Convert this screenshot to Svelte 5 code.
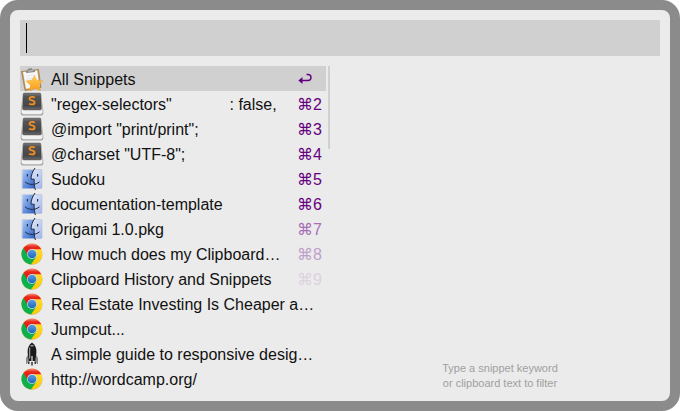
<script>
  const items = [
    { icon: 'clip', text: 'All Snippets', key: 'return', tone: '#660080' },
    { icon: 'sublime', text: '"regex-selectors"             : false,', key: '2', tone: '#660080' },
    { icon: 'sublime', text: '@import "print/print";', key: '3', tone: '#660080' },
    { icon: 'sublime', text: '@charset "UTF-8";', key: '4', tone: '#660080' },
    { icon: 'finder', text: 'Sudoku', key: '5', tone: '#660080' },
    { icon: 'finder', text: 'documentation-template', key: '6', tone: '#660080' },
    { icon: 'finder', text: 'Origami 1.0.pkg', key: '7', tone: '#a86fb8' },
    { icon: 'chrome', text: 'How much does my Clipboard…', key: '8', tone: '#c09fcb' },
    { icon: 'chrome', text: 'Clipboard History and Snippets', key: '9', tone: '#dcd2e0' },
    { icon: 'chrome', text: 'Real Estate Investing Is Cheaper a…' },
    { icon: 'chrome', text: 'Jumpcut...' },
    { icon: 'rocket', text: 'A simple guide to responsive desig…' },
    { icon: 'chrome', text: 'http://wordcamp.org/' }
  ];

  let query = $state('');
  let selected = $state(0);
</script>

<svg class="defs" aria-hidden="true">
  <defs>
    <linearGradient id="finderL" x1="0" y1="0" x2="1" y2="1">
      <stop offset="0" stop-color="#a9c8f4" /><stop offset="1" stop-color="#2b5fc6" />
    </linearGradient>
    <linearGradient id="finderR" x1="0" y1="0" x2="1" y2="1">
      <stop offset="0" stop-color="#f4f7fc" /><stop offset="1" stop-color="#9fb4ea" />
    </linearGradient>
    <linearGradient id="keycap" x1="0" y1="0" x2="0" y2="1">
      <stop offset="0" stop-color="#7c7c7c" /><stop offset="0.2" stop-color="#555" /><stop offset="0.75" stop-color="#464646" /><stop offset="1" stop-color="#6a6a6a" />
    </linearGradient>
    <linearGradient id="star" x1="0" y1="0" x2="0" y2="1">
      <stop offset="0" stop-color="#ffcf50" /><stop offset="1" stop-color="#fc9a1c" />
    </linearGradient>
    <linearGradient id="hub" x1="0" y1="0" x2="0" y2="1">
      <stop offset="0" stop-color="#5a9ce0" /><stop offset="1" stop-color="#1c67b8" />
    </linearGradient>
    <linearGradient id="red" x1="0" y1="0" x2="0" y2="1">
      <stop offset="0" stop-color="#f59080" /><stop offset="0.3" stop-color="#e8281c" /><stop offset="1" stop-color="#f00c0c" />
    </linearGradient>
    <linearGradient id="yellow" x1="0" y1="0" x2="0" y2="1">
      <stop offset="0" stop-color="#ffe14a" /><stop offset="1" stop-color="#fdc800" />
    </linearGradient>
  </defs>
</svg>

<main>
  <div class="search">
    <input type="text" aria-label="Filter snippets" bind:value={query} />
    {#if !query}<span class="caret"></span>{/if}
  </div>
  <div class="body">
    <ul>
      {#each items as item, i}
        <li>
          <button type="button" class:active={i === selected} onclick={() => (selected = i)}>
            <svg class="icon" viewBox="0 0 24 24" aria-hidden="true">
              {#if item.icon === 'clip'}
                <path d="M1.500 4.500 18.500 2.500 21 20.500 5 23.500z" fill="#c79a5c" stroke="#8f6a3b" stroke-width=".6" />
                <path d="M3 5 17.300 3.600 19.500 20 6 21.800z" fill="#f7f7f7" />
                <path d="M6 9l9-1M6.500 12l7-.8M7 15l4-.5" stroke="#dfe1e4" stroke-width=".7" />
                <path d="M6 4.800 7.300 3.200 8.500 1.600l3-.3 1.200 1.400 2 .8.3 1.500-8.800 1z" fill="#858585" />
                <path d="M8 4.200l5-.6" stroke="#d0d0d0" />
                <path d="M14.500 8.400l2.500 5 6 .3-4.300 4.200 2 6-5.700-2.700-5.400 3.100.7-6.100-4.300-4.300 6-.8z" fill="url(#star)" stroke="#eba23a" stroke-width=".4" />
              {:else if item.icon === 'sublime'}
                <path d="M3 1.500h18l2.300 17.500v2q0 2.500-2.500 2.500H3.200Q.7 23.500.7 21v-2z" fill="#a6a6a6" />
                <path d="M3 2h18l1.500 17.500q0 2.800-2.500 2.800H4q-2.500 0-2.500-2.800z" fill="#f2f2f2" />
                <path d="M4.500 1h15q1.200 0 1.300 1.200l.7 14.300q0 1.500-1.500 1.500H4q-1.500 0-1.500-1.500l.7-14.300Q3.300 1 4.500 1z" fill="url(#keycap)" stroke="#444" stroke-width=".4" />
                <path d="M14.800 5.600C13.400 4.500 9.700 4.400 9.500 6.600 9.400 9 14.700 7.900 14.600 10.600 14.500 13 10.600 12.800 9 11.600" fill="none" stroke="#f58f22" stroke-width="1.800" />
              {:else if item.icon === 'finder'}
                <rect x="2" y="2.500" width="20" height="19" rx="1" fill="url(#finderR)" stroke="#a9b3cc" stroke-width=".5" />
                <path d="M2.500 3h11.200c-1.800 3.500-2.500 6-2.700 9.200h3c-.1 3.500 0 6 .8 9H2.500z" fill="url(#finderL)" />
                <path d="M15 1c-2.700 4-3.800 7-4 11.200h3.200c-.2 4 .1 7 1.200 10.800" fill="none" stroke="#222c40" stroke-width="1" />
                <path d="M7.400 7v2.500M17.600 7v2.500" stroke="#20365f" stroke-width="1.200" />
                <path d="M5 14.800c4 3.500 10.500 3.500 14.500 0" fill="none" stroke="#202c47" stroke-width="1" />
              {:else if item.icon === 'chrome'}
                <ellipse cx="12" cy="12.800" rx="10.500" ry="10.300" fill="#c2c2c2" />
                <circle cx="12" cy="12" r="10.500" fill="url(#yellow)" />
                <path d="M3.500 5.800A10.500 10.500 0 0 0 11 22.450L16.500 14.500 12 12z" fill="#0db04b" />
                <path d="M3.500 5.800A10.500 10.500 0 0 1 21.300 7.200H12L7.600 13z" fill="url(#red)" />
                <circle cx="12" cy="12" r="4.900" fill="#d5e2ea" />
                <circle cx="12" cy="12" r="4.300" fill="url(#hub)" />
              {:else}
                <path d="M8.600 11.500 6 16v6.500l2.500-3zM15.400 11.500 18 16v6.500l-2.500-3z" fill="#8a8a8a" />
                <path d="M12 .6c3.400 2.400 4.500 5.700 4.400 9.400L15.400 19H8.600L7.600 10C7.500 6.300 8.600 3 12 .6z" fill="#1b1b1b" />
                <path d="M9.700 5.500v11" stroke="#a5a5a5" stroke-width="1.100" />
                <path d="M10.500 3.800h3" stroke="#ddd" stroke-width="1" />
                <path d="M12 14v7" stroke="#e3e3e3" stroke-width="1.200" />
                <path d="M9 19.500 8.500 22M15 19.500l.5 2.500M12 20v3.500" stroke="#333" stroke-width="1.500" />
              {/if}
            </svg>
            <span class="label">{item.text}</span>
            {#if item.key === 'return'}
              <svg class="return" viewBox="0 0 14 12" role="img" aria-label="Return">
                <path d="M8.500 1.500h1.500a2.800 2.800 0 0 1 0 6H3" fill="none" stroke={item.tone} stroke-width="1.400" />
                <path d="M.3 7.500 4.500 4v7z" fill={item.tone} />
              </svg>
            {:else if item.key}
              <span class="key" style:color={item.tone}><span class="cmd">⌘</span>{item.key}</span>
            {/if}
          </button>
        </li>
      {/each}
    </ul>
    <div class="scroll"></div>
    <aside>
      <p>Type a snippet keyword<br />or clipboard text to filter</p>
    </aside>
  </div>
</main>

<style>
  :global(body) {
    margin: 0;
    background: #fff;
  }
  .defs {
    position: absolute;
    width: 0;
    height: 0;
  }
  main {
    box-sizing: border-box;
    display: flex;
    flex-direction: column;
    gap: 10px;
    min-height: 100vh;
    padding: 10px 10px 0;
    border: 10px solid #8b8b8b;
    border-radius: 18px;
    background: #ebebeb;
    font-family: "Liberation Sans", Arial, sans-serif;
  }
  .search {
    position: relative;
    height: 36px;
  }
  input {
    box-sizing: border-box;
    display: block;
    width: 100%;
    height: 100%;
    padding: 0 6px;
    border: 0;
    border-radius: 0;
    outline: 0;
    background: #d0d0d0;
    font: 26px "Liberation Sans", Arial, sans-serif;
  }
  .caret {
    position: absolute;
    left: 6px;
    top: 3px;
    width: 1px;
    height: 30px;
    background: #000;
  }
  .body {
    flex: 1;
    display: grid;
    grid-template-columns: 306px 2px 1fr;
    column-gap: 2px;
  }
  ul {
    margin: 0;
    padding: 0;
    list-style: none;
  }
  button {
    box-sizing: border-box;
    display: flex;
    align-items: center;
    width: 100%;
    height: 25px;
    padding: 0 4px 0 0;
    border: 0;
    background: none;
    color: #111;
    font: 16px/25px "Liberation Sans", Arial, sans-serif;
    text-align: left;
  }
  button.active {
    background: #d0d0d0;
  }
  .icon {
    flex: none;
    width: 24px;
    height: 24px;
    margin-right: 7px;
  }
  .label {
    flex: 1;
    padding-top: 2px;
    white-space: pre;
  }
  .key {
    display: flex;
    flex: none;
    padding-top: 2px;
  }
  .cmd {
    font-family: "DejaVu Sans", sans-serif;
    font-size: 16px;
  }
  .return {
    flex: none;
    width: 14px;
    height: 12px;
    margin-right: 10px;
  }
  .scroll {
    height: 83px;
    background: #d0d0d0;
  }
  aside {
    display: flex;
    align-items: flex-end;
    justify-content: center;
    padding-left: 8px;
  }
  p {
    margin: 0 0 10px;
    color: #a0a0a0;
    font-size: 11px;
    line-height: 15px;
    text-align: center;
  }
</style>
